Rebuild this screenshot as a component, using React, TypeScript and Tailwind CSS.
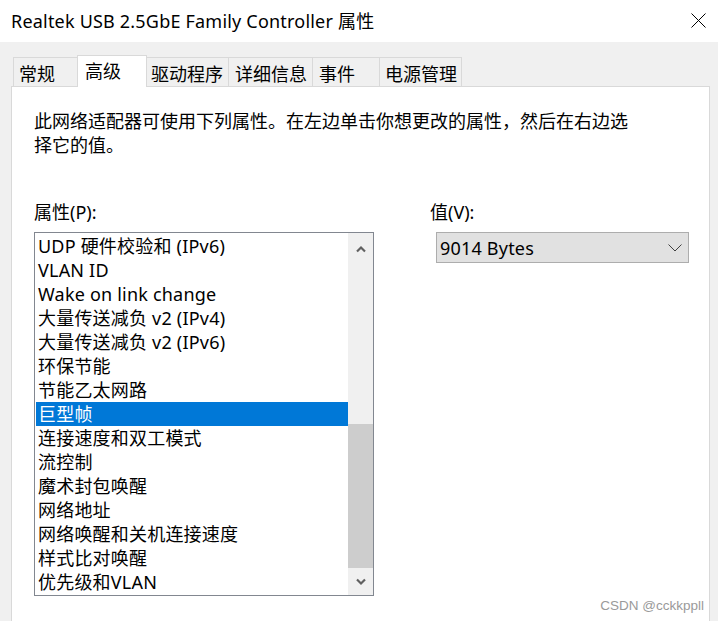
import React from "react";

const FONT = '"Noto Sans", "Noto Sans CJK SC", sans-serif';

const items = [
  "UDP 硬件校验和 (IPv6)",
  "VLAN ID",
  "Wake on link change",
  "大量传送减负 v2 (IPv4)",
  "大量传送减负 v2 (IPv6)",
  "环保节能",
  "节能乙太网路",
  "巨型帧",
  "连接速度和双工模式",
  "流控制",
  "魔术封包唤醒",
  "网络地址",
  "网络唤醒和关机连接速度",
  "样式比对唤醒",
  "优先级和VLAN",
];

export default function App() {
  return (
    <div
      className="relative w-[718px] h-[621px] overflow-hidden bg-[#f0f0f0] text-black text-[18px] leading-[24px]"
      style={{ fontFamily: FONT }}
    >
      {/* Title bar */}
      <div className="h-[42px] bg-white flex items-center justify-between pl-[11px] pr-[12px]">
        <span className="leading-[24px] tracking-[0.2px]">Realtek USB 2.5GbE Family Controller 属性</span>
        <svg width="15" height="15" viewBox="0 0 15 15" className="mt-[-1px]">
          <path d="M0.5 0.5 L14.5 14.5 M14.5 0.5 L0.5 14.5" stroke="#000" strokeWidth="1" fill="none" />
        </svg>
      </div>

      {/* Tabs */}
      <div className="pt-[13px]">
        <div className="flex items-end ml-[13px]">
          <div className="w-[64px] h-[29px] border-t border-l border-[#d9d9d9] pl-[5px] pt-[3px] flex items-center">常规</div>
          <div className="relative z-10 -mb-px w-[70px] h-[32px] bg-white border-t border-l border-r border-[#d9d9d9] pl-[7px] pb-[2px] flex items-center">高级</div>
          <div className="w-[81px] h-[29px] border-t border-[#d9d9d9] pl-[4px] pt-[3px] flex items-center">驱动程序</div>
          <div className="w-[84px] h-[29px] border-t border-l border-[#d9d9d9] pl-[6px] pt-[3px] flex items-center">详细信息</div>
          <div className="w-[67px] h-[29px] border-t border-l border-[#d9d9d9] pl-[6px] pt-[3px] flex items-center">事件</div>
          <div className="w-[83px] h-[29px] border-t border-l border-r border-[#d9d9d9] pl-[5px] pt-[3px] flex items-center">电源管理</div>
        </div>

        {/* Panel */}
        <div className="ml-[11px] w-[699px] h-[560px] bg-white border border-[#d9d9d9] pl-[22px] pt-[22px]">
          <p className="w-[600px]">
            此网络适配器可使用下列属性。在左边单击你想更改的属性，然后在右边选择它的值。
          </p>

          <div className="flex mt-[43px]">
            {/* Left column */}
            <div className="w-[340px]">
              <div>属性(P):</div>
              <div className="mt-[8px] h-[364px] border border-[#828790] flex">
                <div className="w-[313px] pl-[1px] pt-[1px]">
                  {items.map((it, i) => (
                    <div
                      key={i}
                      className={
                        i === 7
                          ? "w-[312px] h-[24px] pl-[2px] bg-[#0078d7] text-white whitespace-nowrap tracking-[0.2px]"
                          : "w-[312px] h-[24px] pl-[2px] whitespace-nowrap tracking-[0.2px]"
                      }
                    >
                      {it}
                    </div>
                  ))}
                </div>
                <div className="w-[25px] bg-[#f0f0f0] flex flex-col">
                  <div className="h-[32px] flex items-center justify-center">
                    <svg width="10" height="8" viewBox="0 0 10 8">
                      <path d="M1 6.5 L5 2.5 L9 6.5" stroke="#606060" strokeWidth="2.2" fill="none" />
                    </svg>
                  </div>
                  <div className="h-[159px]" />
                  <div className="h-[144px] bg-[#cdcdcd]" />
                  <div className="flex-1 flex items-center justify-center">
                    <svg width="10" height="8" viewBox="0 0 10 8">
                      <path d="M1 1.5 L5 5.5 L9 1.5" stroke="#606060" strokeWidth="2.2" fill="none" />
                    </svg>
                  </div>
                </div>
              </div>
            </div>

            {/* Right column */}
            <div className="ml-[56px]">
              <div>值(V):</div>
              <div className="mt-[8px] ml-[6px] w-[253px] h-[31px] bg-[#e1e1e1] border border-[#adadad] flex items-center justify-between pl-[3px] pr-[6px]">
                <span className="tracking-[0.2px]">9014 Bytes</span>
                <svg width="14" height="8" viewBox="0 0 14 8">
                  <path d="M0.5 0.5 L7 7 L13.5 0.5" stroke="#404040" strokeWidth="1" fill="none" />
                </svg>
              </div>
            </div>
          </div>
        </div>
      </div>

      <div
        className="absolute right-[14px] bottom-[7px] text-[13.5px] leading-[16px] text-[#9a9a9a]"
        style={{ fontFamily: '"Liberation Sans", Arial, sans-serif' }}
      >
        CSDN @cckkppll
      </div>
    </div>
  );
}
